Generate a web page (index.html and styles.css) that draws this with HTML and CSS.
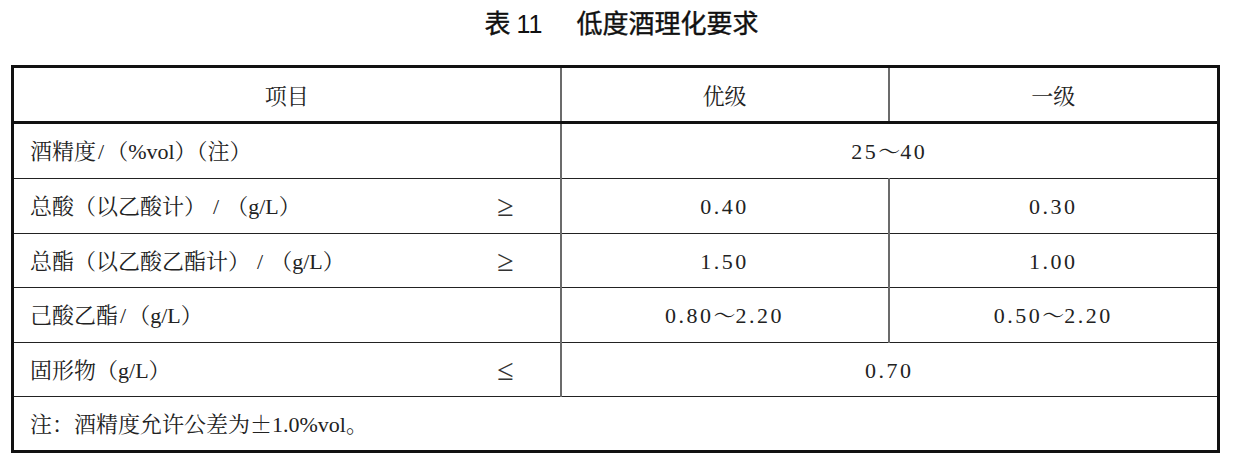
FILE: index.html
```html
<!DOCTYPE html>
<html lang="zh-CN">
<head>
<meta charset="utf-8">
<title>表 11 低度酒理化要求</title>
<link rel="stylesheet" href="styles.css">
</head>
<body>
<div class="page">
  <h1 class="caption"><span class="cap-no">表 <span class="num">11</span></span><span class="cap-text">低度酒理化要求</span></h1>
  <table class="spec">
    <colgroup>
      <col class="c1">
      <col class="c2">
      <col class="c3">
    </colgroup>
    <thead>
      <tr class="head">
        <th>项目</th>
        <th>优级</th>
        <th>一级</th>
      </tr>
    </thead>
    <tbody>
      <tr class="r1">
        <td class="item"><div class="item-in"><span class="label">酒精度<span class="lt sl1">/</span>（<span class="lt">%vol</span>）（注）</span></div></td>
        <td class="val" colspan="2"><span class="n">25</span>～<span class="n">40</span></td>
      </tr>
      <tr class="r2">
        <td class="item"><div class="item-in"><span class="label">总酸（以乙酸计）<span class="lt sl">/</span>（<span class="lt">g/L</span>）</span><span class="sym">≥</span></div></td>
        <td class="val"><span class="n">0.40</span></td>
        <td class="val"><span class="n">0.30</span></td>
      </tr>
      <tr class="r3">
        <td class="item"><div class="item-in"><span class="label">总酯（以乙酸乙酯计）<span class="lt sl">/</span>（<span class="lt">g/L</span>）</span><span class="sym">≥</span></div></td>
        <td class="val"><span class="n">1.50</span></td>
        <td class="val"><span class="n">1.00</span></td>
      </tr>
      <tr class="r4">
        <td class="item"><div class="item-in"><span class="label">己酸乙酯<span class="lt sl1">/</span>（<span class="lt">g/L</span>）</span></div></td>
        <td class="val"><span class="n">0.80</span>～<span class="n">2.20</span></td>
        <td class="val"><span class="n">0.50</span>～<span class="n">2.20</span></td>
      </tr>
      <tr class="r5">
        <td class="item"><div class="item-in"><span class="label">固形物（<span class="lt">g/L</span>）</span><span class="sym">≤</span></div></td>
        <td class="val" colspan="2"><span class="n">0.70</span></td>
      </tr>
      <tr class="r6 note">
        <td colspan="3">注：酒精度允许公差为±<span class="n">1.0</span><span class="lt">%vol</span>。</td>
      </tr>
    </tbody>
  </table>
</div>
</body>
</html>
```

FILE: styles.css
```css
html, body {
  margin: 0;
  padding: 0;
  background: #ffffff;
}

.page {
  width: 1235px;
  height: 465px;
  overflow: hidden;
  font-family: "Noto Serif CJK SC", "Noto Sans CJK SC", serif;
  color: #222;
}

.caption {
  margin: 0;
  height: 65px;
  box-sizing: border-box;
  padding-top: 6px;
  padding-left: 8px;
  text-align: center;
  font-family: "Noto Sans CJK SC", sans-serif;
  font-weight: 400;
  font-size: 26px;
  line-height: 32px;
  color: #111;
  -webkit-text-stroke: 0.4px #111;
}

.caption .num {
  font-family: "Liberation Sans", "Noto Sans CJK SC", sans-serif;
  font-size: 25px;
  -webkit-text-stroke: 0;
}

.cap-no {
  margin-right: 34px;
}

.spec {
  border-collapse: collapse;
  margin-left: 11px;
  width: 1209px;
  table-layout: fixed;
  border: 3px solid #111;
  font-size: 22px;
}

.c1 { width: 548px; }
.c2 { width: 328px; }
.c3 { width: auto; }

.spec th,
.spec td {
  padding: 0;
  font-weight: 400;
  border-left: 2px solid #6b6b6b;
  border-bottom: 1px solid #222;
  vertical-align: middle;
  line-height: 26px;
}

.spec th {
  text-align: center;
  border-bottom: 3px solid #111;
}

.spec .head th { height: 53px; }
.spec .r1 td { height: 54px; }
.spec .r2 td { height: 54px; }
.spec .r3 td { height: 53px; }
.spec .r4 td { height: 54px; }
.spec .r5 td { height: 53px; }
.spec .r6 td { height: 53px; }

.item-in {
  display: flex;
  align-items: center;
  padding-left: 16px;
}

.label {
  flex: 1;
}

.sym {
  width: 40px;
  text-align: center;
  margin-right: 34px;
  font-family: "Liberation Serif", serif;
  font-size: 30px;
  line-height: 26px;
  color: #333;
}

.val {
  text-align: center;
}

.n, .lt {
  font-family: "Liberation Serif", serif;
  font-size: 22px;
}

.sl {
  margin: 0 7px;
}

.sl1 {
  margin: 0 2px;
}

.val .n {
  letter-spacing: 2.5px;
}

.note td {
  padding-left: 16px;
  text-align: left;
}
```
